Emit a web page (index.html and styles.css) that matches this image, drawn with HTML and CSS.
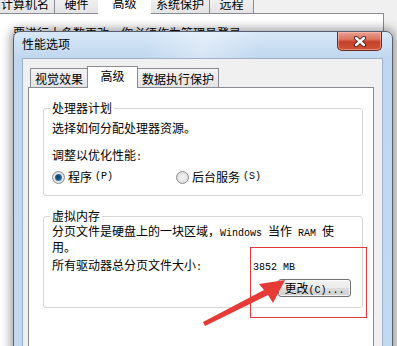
FILE: index.html
```html
<!DOCTYPE html>
<html lang="zh-CN">
<head>
<meta charset="utf-8">
<title>性能选项</title>
<link rel="stylesheet" href="styles.css">
</head>
<body>
<div class="bg-window">
  <div class="bg-tabs">
    <div class="bg-tab">计算机名</div>
    <div class="bg-tab">硬件</div>
    <div class="bg-tab active">高级</div>
    <div class="bg-tab">系统保护</div>
    <div class="bg-tab">远程</div>
  </div>
  <div class="bg-panel">
    <p class="bg-note">要进行大多数更改，你必须作为管理员登录。</p>
  </div>
</div>

<div class="dialog">
  <div class="titlebar">
    <span class="title">性能选项</span>
    <button class="close" aria-label="关闭">
      <svg width="14" height="11" viewBox="0 0 14 11">
        <path d="M3 2 L11 9 M11 2 L3 9" stroke="#4a1a12" stroke-width="4.2" stroke-linecap="round" fill="none"/>
        <path d="M3 2 L11 9 M11 2 L3 9" stroke="#ffffff" stroke-width="2.4" stroke-linecap="round" fill="none"/>
      </svg>
    </button>
  </div>
  <div class="client">
    <div class="tabs">
      <div class="tab">视觉效果</div>
      <div class="tab active">高级</div>
      <div class="tab">数据执行保护</div>
    </div>
    <div class="panel">
      <fieldset class="group">
        <legend>处理器计划</legend>
        <p class="desc">选择如何分配处理器资源。</p>
        <p class="label">调整以优化性能<span class="en">:</span></p>
        <div class="radios">
          <label class="option"><span class="radio on"></span>程序<span class="en">(P)</span></label>
          <label class="option"><span class="radio"></span>后台服务<span class="en">(S)</span></label>
        </div>
      </fieldset>
      <fieldset class="group vm">
        <legend>虚拟内存</legend>
        <p class="desc tight">分页文件是硬盘上的一块区域，<span class="en">Windows </span>当作<span class="en"> RAM </span>使<br>用。</p>
        <div class="size-row">
          <span>所有驱动器总分页文件大小<span class="en">:</span></span>
          <span><span class="en">3852 MB</span></span>
        </div>
        <div class="btn-row">
          <button class="btn">更改<span class="en">(C)...</span></button>
        </div>
      </fieldset>
    </div>
  </div>
</div>

<div class="annot-box"></div>
<svg class="annot-arrow" width="397" height="346" viewBox="0 0 397 346">
  <polygon points="203,322 264,290 259,284 285,280 273,303 268,295 205,326" fill="#e53a36"/>
</svg>
</body>
</html>
```
FILE: styles.css
```css
* { box-sizing: border-box; }
html, body { margin: 0; padding: 0; }
body {
  width: 397px;
  height: 346px;
  overflow: hidden;
  position: relative;
  background: #f0f0f0;
  font-family: "Noto Sans CJK SC", "Noto Sans", sans-serif;
  font-size: 12px;
  color: #000;
}
.en { font-family: "Liberation Mono", monospace; font-size: 10px; line-height: 1; }
p { margin: 0; }

/* background window (System Properties) */
.bg-window { display: flex; flex-direction: column; height: 100%; }
.bg-tabs {
  display: flex;
  align-items: flex-end;
  height: 21px;
  margin: -8px 0 0 -5px;
}
.bg-tab {
  min-width: 45px;
  height: 20px;
  padding: 0 5px;
  border: 1px solid #898c95;
  border-bottom: none;
  margin-right: -1px;
  background: linear-gradient(#f4f4f4, #e4e4e4);
  text-align: center;
  line-height: 20px;
  white-space: nowrap;
}
.bg-tab.active {
  min-width: 53px;
  height: 22px;
  background: #fff;
  position: relative;
  margin-bottom: -1px;
  z-index: 1;
  border-color: #fff;
}
.bg-panel {
  flex: 1;
  width: 384px;
  background: #fff;
  border-top: 1px solid #898c95;
  border-right: 1px solid #898c95;
}
.bg-note { margin: 11px 0 0 13px; line-height: 15px; white-space: nowrap; }

/* performance options dialog */
.dialog {
  position: absolute;
  left: 13px;
  top: 31px;
  width: 380px;
  height: 330px;
  border: 1px solid #56606e;
  border-radius: 7px 7px 0 0;
  background:
    linear-gradient(100deg, rgba(255,255,255,0) 35%, rgba(255,255,255,0.35) 50%, rgba(255,255,255,0) 65%) top / 100% 27px no-repeat,
    linear-gradient(180deg, #d8e8f8 0, #cbdff3 14px, #c0d7ef 26px, #c3d9f0 100%);
  box-shadow: 0 0 10px 3px rgba(0, 0, 0, 0.35);
  display: flex;
  flex-direction: column;
  padding: 0 9px 0 8px;
}
.titlebar {
  height: 26px;
  display: flex;
  align-items: flex-start;
  justify-content: space-between;
  flex: none;
}
.title { line-height: 24px; color: #000; }
.close {
  width: 45px;
  height: 19px;
  margin-right: 1px;
  padding: 0;
  border: 1px solid #6b2a20;
  border-top: none;
  border-radius: 0 0 5px 5px;
  background: linear-gradient(180deg, #e8a193 0, #dc7560 40%, #c5402a 55%, #cf5439 100%);
  box-shadow: inset 0 0 0 1px rgba(255, 210, 200, 0.45);
  display: flex;
  align-items: center;
  justify-content: center;
}
.close svg { display: block; }
.client {
  flex: 1;
  background: #f0f0f0;
  border: 1px solid #9eb1c8;
  border-bottom: none;
  padding: 7px 0 0 5px;
  display: flex;
  flex-direction: column;
}
.tabs {
  display: flex;
  align-items: flex-end;
  padding-left: 2px;
  height: 21px;
  flex: none;
}
.tab {
  height: 19px;
  padding: 0 4px;
  border: 1px solid #898c95;
  border-bottom: none;
  margin-right: -1px;
  background: linear-gradient(#f4f4f4, #e3e3e3);
  line-height: 19px;
  white-space: nowrap;
  text-align: center;
}
.tab.active {
  min-width: 51px;
  height: 22px;
  line-height: 18px;
  background: #fff;
  position: relative;
  margin-bottom: -1px;
  z-index: 1;
}
.panel {
  flex: 1;
  width: 346px;
  background: #fff;
  border: 1px solid #898c95;
  border-bottom: none;
  padding: 12px 10px 0 14px;
}
.group {
  margin: 0;
  padding: 0 8px 10px 8px;
  border: 1px solid #d6d6d6;
  border-radius: 3px;
  min-width: 0;
}
.group legend {
  padding: 0 2px;
  margin-left: -2px;
  line-height: 16px;
}
.group.vm { margin-top: 12px; }
.desc { margin-top: 4px; line-height: 15px; white-space: nowrap; }
.desc.tight { margin-top: -1px; }
.label { margin-top: 12px; line-height: 15px; }
.radios {
  margin-top: 6px;
  display: grid;
  grid-template-columns: 124px auto;
  height: 16px;
  line-height: 16px;
}
.option { display: flex; align-items: center; gap: 3px; white-space: nowrap; }
.radio {
  width: 13px;
  height: 13px;
  border-radius: 50%;
  border: 1px solid #8a8c8e;
  background: radial-gradient(circle, #f6f6f6 0, #e2e2e2 60%, #cfcfcf 100%);
  display: inline-flex;
  align-items: center;
  justify-content: center;
  flex: none;
}
.radio.on::after {
  content: "";
  width: 7px;
  height: 7px;
  border-radius: 50%;
  background: radial-gradient(circle at 45% 45%, #0e3a5e 0, #1c5f91 45%, #69aedd 100%);
}
.size-row {
  margin-top: 3px;
  display: grid;
  grid-template-columns: 201px auto;
  line-height: 15px;
  white-space: nowrap;
}
.btn-row { margin-top: 6px; display: flex; justify-content: flex-end; }
.btn {
  width: 73px;
  height: 18px;
  margin-right: 3px;
  padding: 0;
  border: 1px solid #707070;
  border-radius: 3px;
  background: linear-gradient(180deg, #f2f2f2 0, #ebebeb 50%, #dddddd 51%, #cfcfcf 100%);
  box-shadow: inset 0 0 0 1px rgba(255, 255, 255, 0.7);
  font-family: "Noto Sans CJK SC", sans-serif;
  font-size: 12px;
  line-height: 16px;
  color: #000;
  white-space: nowrap;
}

/* red annotations laid over the screenshot */
.annot-box {
  position: absolute;
  left: 250px;
  top: 247px;
  width: 117px;
  height: 71px;
  border: 1px solid #e0383e;
}
.annot-arrow { position: absolute; left: 0; top: 0; pointer-events: none; }
```
